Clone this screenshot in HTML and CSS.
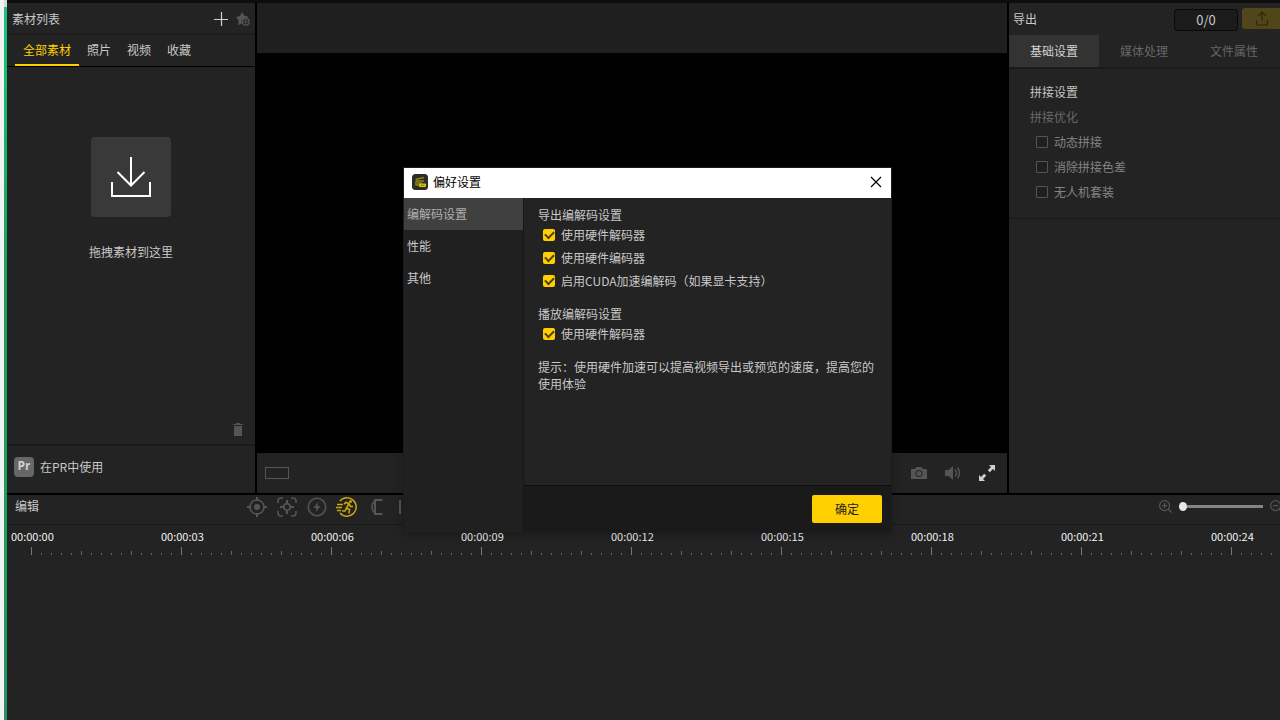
FILE: index.html
```html
<!DOCTYPE html>
<html lang="zh-CN">
<head>
<meta charset="utf-8">
<title>偏好设置</title>
<link rel="stylesheet" href="styles.css">
</head>
<body>
<div class="desktop-edge"><span class="edge-accent"></span></div>
<div class="app">
  <main class="workspace">
    <section class="panel library">
      <header class="library-head">
        <h2 class="title">素材列表</h2>
        <button class="icon-btn light" aria-label="添加素材"><svg width="14" height="14" viewBox="0 0 14 14"><path d="M7.500 0v14M0 7.500h14" stroke="currentColor" stroke-width="1.200"/></svg></button>
        <button class="icon-btn" aria-label="收藏素材"><svg width="14" height="14" viewBox="0 0 14 14"><path d="M6 0l2 3.600 4.200.8-1.500 1.800a4 4 0 0 0-4.900 5.600L2 13l.7-4.600L0 5l4.100-.9z" fill="currentColor"/><circle cx="9.800" cy="9.800" r="3.300" fill="none" stroke="currentColor" stroke-width="1.300"/><path d="M9.800 8v3.600M8 9.800h3.600" stroke="currentColor"/></svg></button>
      </header>
      <nav class="library-tabs">
        <button class="tab active">全部素材</button>
        <button class="tab">照片</button>
        <button class="tab">视频</button>
        <button class="tab">收藏</button>
      </nav>
      <div class="drop-area">
        <button class="drop-tile" aria-label="导入素材"><svg width="42" height="42" viewBox="0 0 42 42" fill="none" stroke="#fff" stroke-width="2"><path d="M21 1v28M7.500 16L21 29.500 34.500 16M2 26v14h38V26"/></svg></button>
        <p class="drop-text">拖拽素材到这里</p>
        <button class="icon-btn trash" aria-label="删除"><svg width="10" height="13" viewBox="0 0 10 13"><path d="M0 1h3V0h4v1h3v1H0zM1 3h8v10H1z" fill="currentColor"/></svg></button>
      </div>
      <footer class="pr-row"><span class="pr-badge">Pr</span><span>在PR中使用</span></footer>
    </section>

    <section class="preview">
      <div class="preview-head"></div>
      <div class="preview-screen"></div>
      <div class="preview-controls">
        <button class="ratio" aria-label="画面比例"></button>
        <button class="icon-btn" aria-label="截图"><svg width="16" height="12" viewBox="0 0 16 12"><path fill-rule="evenodd" d="M0 2h4l1.500-2h5L12 2h4v10H0zM8 3a3.500 3.500 0 1 0 0 7 3.500 3.500 0 0 0 0-7z" fill="currentColor"/><circle cx="8" cy="6.500" r="2.500" fill="currentColor"/></svg></button>
        <button class="icon-btn" aria-label="音量"><svg width="16" height="14" viewBox="0 0 16 14"><path d="M0 4h3.500L8 0v14L3.500 10H0z" fill="currentColor"/><path d="M10 3.500q3 3.500 0 7M12.500 1.500q4 5.500 0 11" fill="none" stroke="currentColor" stroke-width="1.400"/></svg></button>
        <button class="icon-btn light" aria-label="全屏"><svg width="16" height="16" viewBox="0 0 16 16"><path d="M10 0h6v6l-2-2-3.200 3.200-2-2L12 2zM0 10l2 2 3.200-3.200 2 2L4 14l2 2H0z" fill="currentColor"/></svg></button>
      </div>
    </section>

    <section class="panel export">
      <header class="export-head">
        <h2 class="title">导出</h2>
        <span class="counter">0/0</span>
        <button class="export-btn" aria-label="导出"><svg width="12" height="15" viewBox="0 0 12 15" fill="none" stroke="#2c280f" stroke-width="1.200"><path d="M6 10V1M2 5l4-4 4 4M.6 9v5h10.800V9"/></svg></button>
      </header>
      <nav class="export-tabs">
        <button class="etab active">基础设置</button>
        <button class="etab">媒体处理</button>
        <button class="etab">文件属性</button>
      </nav>
      <div class="stitch">
        <h3 class="stitch-title">拼接设置</h3>
        <p class="stitch-sub">拼接优化</p>
        <label class="option"><input type="checkbox" class="check dark">动态拼接</label>
        <label class="option"><input type="checkbox" class="check dark">消除拼接色差</label>
        <label class="option"><input type="checkbox" class="check dark">无人机套装</label>
      </div>
    </section>
  </main>

  <section class="timeline">
    <header class="timeline-bar">
      <h2 class="title timeline-title">编辑</h2>
      <div class="tools">
        <button class="icon-btn" aria-label="定位"><svg width="20" height="20" viewBox="0 0 20 20" fill="none" stroke="currentColor" stroke-width="1.600"><circle cx="10" cy="10" r="7"/><circle cx="10" cy="10" r="3" fill="currentColor" stroke="none"/><path d="M10 0v4M10 16v4M0 10h4M16 10h4" stroke-width="2"/></svg></button>
        <button class="icon-btn" aria-label="跟踪"><svg width="20" height="20" viewBox="0 0 20 20" fill="none" stroke="currentColor" stroke-width="1.600"><path d="M1 6V4q0-3 3-3h2M14 1h2q3 0 3 3v2M19 14v2q0 3-3 3h-2M6 19H4q-3 0-3-3v-2"/><circle cx="10" cy="10" r="3.200"/><path d="M10 3v4M10 13v4M3 10h4M13 10h4" stroke-width="2"/></svg></button>
        <button class="icon-btn" aria-label="闪电剪辑"><svg width="20" height="20" viewBox="0 0 20 20"><circle cx="10" cy="10" r="8.700" fill="none" stroke="currentColor" stroke-width="1.500"/><path d="M11.500 4.500L6.500 11h3l-1 4.500 5-6.500h-3z" fill="currentColor"/></svg></button>
        <button class="icon-btn gold" aria-label="快速"><svg width="22" height="22" viewBox="0 0 22 22" fill="none" stroke="currentColor"><path d="M4 5a9.200 9.200 0 1 1 0 12" stroke-width="1.500"/><path d="M1 8.500h6M0 11.500h6M1 14.500h4" stroke-width="1.300"/><circle cx="14.500" cy="5.500" r="1.500" fill="currentColor" stroke="none"/><path d="M8 8l2-1.500 3 1-2.500 4.500 3 1.500-.5 4M10.500 12L9 15H6M13 8l1.500 2.500H17" stroke-width="1.600"/></svg></button>
        <button class="icon-btn" aria-label="入点"><svg width="12" height="16" viewBox="0 0 12 16" fill="none" stroke="currentColor"><path d="M11.500 1H4v14h7.500" stroke-width="2"/><path d="M3 2.500q-4 5.500 0 11" stroke-width="1.600"/></svg></button>
        <button class="icon-btn" aria-label="出点"><svg width="16" height="14" viewBox="0 0 16 14" fill="none" stroke="currentColor" stroke-width="2"><path d="M1 0v14M6 1h7v12H6"/></svg></button>
      </div>
      <div class="zoomer">
        <button class="icon-btn" aria-label="放大"><svg width="13" height="13" viewBox="0 0 13 13" fill="none" stroke="currentColor" stroke-width="1.200"><circle cx="5.600" cy="5.600" r="5"/><path d="M5.600 3v5.200M3 5.600h5.200M9 9l3.500 3.500"/></svg></button>
        <input type="range" class="slider" min="0" max="100" value="0" aria-label="时间轴缩放">
        <button class="icon-btn" aria-label="缩小"><svg width="13" height="13" viewBox="0 0 13 13" fill="none" stroke="currentColor" stroke-width="1.200"><circle cx="5.600" cy="5.600" r="5"/><path d="M3 5.600h5.200M9 9l3.500 3.500"/></svg></button>
      </div>
    </header>
    <div class="ruler">
      <span class="mark">00:00:00</span><span class="mark">00:00:03</span><span class="mark">00:00:06</span><span class="mark">00:00:09</span><span class="mark">00:00:12</span><span class="mark">00:00:15</span><span class="mark">00:00:18</span><span class="mark">00:00:21</span><span class="mark">00:00:24</span>
    </div>
  </section>
</div>

<div class="dialog" role="dialog" aria-labelledby="dialog-title">
  <header class="dialog-head">
    <svg class="app-icon" width="16" height="16" viewBox="0 0 16 16"><rect width="16" height="16" rx="3.500" fill="#2b2b2b"/><path d="M3.500 5.500l8.500-2M4 7h8M4 7v4h3M5 9h5" stroke="#8e8612" stroke-width="1.500" fill="none"/><rect x="7" y="9.500" width="7" height="3.500" rx="1" fill="#e0d000"/><path d="M8.500 11.300h4" stroke="#77700a"/></svg>
    <h1 class="dialog-title" id="dialog-title">偏好设置</h1>
    <button class="close" aria-label="关闭"><svg width="12" height="12" viewBox="0 0 12 12"><path d="M1 1l10 10M11 1L1 11" stroke="#000" stroke-width="1.200"/></svg></button>
  </header>
  <div class="dialog-body">
    <nav class="side">
      <button class="side-item active">编解码设置</button>
      <button class="side-item">性能</button>
      <button class="side-item">其他</button>
    </nav>
    <div class="pane">
      <div class="settings">
        <fieldset class="group">
          <legend>导出编解码设置</legend>
          <label class="setting"><input type="checkbox" class="check" checked>使用硬件解码器</label>
          <label class="setting"><input type="checkbox" class="check" checked>使用硬件编码器</label>
          <label class="setting"><input type="checkbox" class="check" checked>启用CUDA加速编解码（如果显卡支持）</label>
        </fieldset>
        <fieldset class="group">
          <legend>播放编解码设置</legend>
          <label class="setting"><input type="checkbox" class="check" checked>使用硬件解码器</label>
        </fieldset>
        <p class="hint">提示：使用硬件加速可以提高视频导出或预览的速度，提高您的使用体验</p>
      </div>
      <footer class="dialog-foot"><button class="ok">确定</button></footer>
    </div>
  </div>
</div>
</body>
</html>
```

FILE: styles.css
```css
* { box-sizing: border-box; }

body {
  margin: 0;
  height: 100vh;
  display: flex;
  position: relative;
  overflow: hidden;
  background: #000;
  color: #c8c8c8;
  font: 12px/16px "Noto Sans CJK SC", sans-serif;
}

h1, h2, h3, p, fieldset { margin: 0; padding: 0; border: 0; font: inherit; }
button { margin: 0; padding: 0; border: 0; background: none; color: inherit; font: inherit; }
svg { display: block; }

/* window edge */
.desktop-edge {
  flex: 0 0 7px;
  display: flex;
  padding: 7px 0 0 4px;
  background: linear-gradient(90deg, #f2f2f2 4px, #d8d8d8 4px);
}
.edge-accent { flex: 1; background: linear-gradient(#17c47c, #1c9e5c 40%, #1c9e5c 80%, #2c8f64); }

.app { flex: 1; min-width: 0; display: flex; flex-direction: column; border-top: 3px solid #0d0d0d; }
.workspace { flex: 1; min-height: 0; display: grid; grid-template-columns: 248px 1fr 271px; gap: 2px; }
.panel { display: flex; flex-direction: column; min-width: 0; overflow: hidden; background: #232323; }
.icon-btn { flex: none; color: #555; }
.icon-btn.light { color: #d0d0d0; }
.icon-btn.gold { color: #c9a60c; }

/* library */
.library-head { display: flex; align-items: center; gap: 8px; height: 32px; padding: 0 5px; border-bottom: 1px solid #1a1a1a; }
.title { flex: 1; }
.library-tabs { display: flex; height: 32px; padding-left: 8px; border-bottom: 1px solid #000; }
.tab { padding: 0 8px; border-bottom: 2px solid transparent; }
.tab.active { color: #ffcf00; border-color: #ffcf00; }
.drop-area { flex: 1; display: flex; flex-direction: column; align-items: center; padding: 70px 12px 8px; }
.drop-tile { width: 80px; height: 80px; display: grid; place-items: center; border-radius: 4px; background: #393939; }
.drop-text { margin-top: 27px; }
.trash { margin-top: auto; align-self: flex-end; }
.pr-row { display: flex; align-items: center; gap: 6px; height: 49px; padding: 0 7px 5px; border-top: 2px solid #1a1a1a; }
.pr-badge { width: 20px; height: 20px; border-radius: 4px; background: #676767; color: #d0d0d0; font: bold 12px/18px "Open Sans", sans-serif; text-align: center; }

/* preview */
.preview { display: flex; flex-direction: column; min-width: 0; }
.preview-head { flex: 0 0 50px; background: #1f1f1f; }
.preview-screen { flex: 1; background: #000; }
.preview-controls { flex: 0 0 40px; display: flex; align-items: center; gap: 18px; padding: 0 12px 0 8px; background: #232323; }
.ratio { width: 24px; height: 12px; margin-right: auto; border: 1px solid #555; }

/* export */
.export-head { flex: none; display: flex; align-items: center; gap: 4px; height: 32px; padding-left: 4px; }
.counter { width: 64px; height: 22px; margin-top: 2px; border: 1px solid #080808; border-radius: 3px; background: #1b1b1b; font-size: 13px; line-height: 20px; text-align: center; }
.export-btn { flex: none; width: 40px; height: 21px; margin: 0 -2px 1px 0; display: grid; place-items: center; border-radius: 3px; background: #50461a; }
.export-tabs { flex: none; display: grid; grid-template-columns: repeat(3, 90px); height: 34px; border-bottom: 2px solid #1a1a1a; }
.etab { color: #666; }
.etab.active { background: #333; color: #d2d2d2; }
.stitch { padding: 10px 21px 14px; line-height: 25px; border-bottom: 1px solid #191919; color: #858585; }
.stitch-title { color: #c4c4c4; }
.stitch-sub { color: #696969; }
.option { display: flex; align-items: center; gap: 6px; padding-left: 6px; }

.check { appearance: none; flex: none; display: grid; place-items: center; width: 12px; height: 12px; margin: 0; border-radius: 2px; background: #ffcf00; }
.check:checked::before { content: ""; width: 7px; height: 4px; margin-bottom: 2px; border: solid #4a4014; border-width: 0 0 2px 2px; transform: rotate(-45deg); }
.check.dark { border: 1px solid #555; border-radius: 1px; background: #1f1f1f; }

/* timeline */
.timeline { flex: 0 0 227px; border-top: 2px solid #000; background: #232323; overflow: hidden; }
.timeline-bar { display: flex; align-items: center; height: 30px; padding-left: 8px; border-bottom: 1px solid #1a1a1a; }
.timeline-title { flex: 0 0 227px; padding-bottom: 7px; }
.tools { display: grid; grid-template-columns: repeat(6, 30px); justify-items: center; align-items: center; height: 24px; margin-bottom: 5px; }
.zoomer { display: flex; align-items: center; gap: 7px; margin: 0 -3px 7px auto; }
.slider { appearance: none; width: 84px; height: 10px; margin: 0; background: linear-gradient(#858585, #858585) center / 100% 3px no-repeat; }
.slider::-webkit-slider-thumb { appearance: none; width: 8px; height: 9px; border-radius: 50%; background: #e8e8e8; }
.ruler {
  display: grid;
  grid-template-columns: repeat(9, 150px);
  height: 30px;
  color: #f2f2f2;
  font-size: 11px;
  line-height: 22px;
  background:
    repeating-linear-gradient(90deg, #777 0 1px, transparent 1px 150px) 24px 22px / 100% 8px no-repeat,
    repeating-linear-gradient(90deg, #666 0 1px, transparent 1px 50px) 24px 26px / 100% 4px no-repeat,
    repeating-linear-gradient(90deg, #666 0 1px, transparent 1px 10px) 24px 28px / 100% 2px no-repeat;
}
.mark { padding-left: 4px; }

/* preferences dialog */
.dialog {
  position: absolute;
  left: 403px;
  top: 167px;
  width: 489px;
  display: flex;
  flex-direction: column;
  border: 1px solid #1c1c1c;
  background: #232323;
  box-shadow: 0 2px 10px rgba(0, 0, 0, .25);
}
.dialog-head { display: flex; align-items: center; gap: 5px; height: 30px; padding: 0 9px 2px 8px; background: #fff; color: #000; }
.dialog-title { flex: 1; }
.dialog-body { display: grid; grid-template-columns: 120px 1fr; }
.side { display: flex; flex-direction: column; border-right: 1px solid #181818; background: #202020; }
.side-item { height: 32px; padding-left: 3px; text-align: left; }
.side-item.active { background: #404040; color: #b0b0b0; }
.pane { display: flex; flex-direction: column; min-height: 334px; }
.settings { flex: 1; padding: 8px 14px; line-height: 17px; }
.group { margin-bottom: 13px; }
.group legend { padding: 0; }
.setting { display: flex; align-items: center; gap: 6px; height: 23px; padding-left: 5px; }
.dialog-foot { display: flex; justify-content: flex-end; padding: 9px; border-top: 1px solid #0e0e0e; background: #1a1a1a; }
.ok { width: 70px; height: 28px; border-radius: 2px; background: #ffcf00; color: #222; }
```
